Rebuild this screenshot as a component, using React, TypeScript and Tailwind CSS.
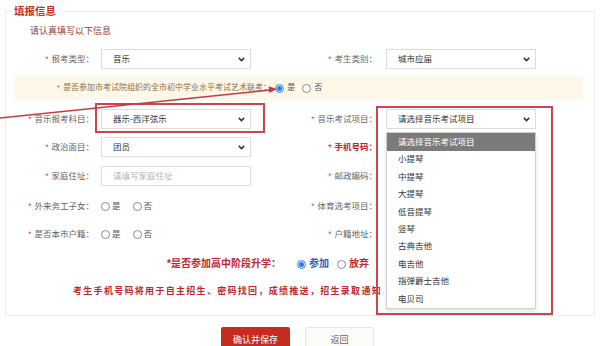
import type { ReactNode } from 'react'

// ── Small bits ─────────────────────────────────────────────────────────────

function Star() {
  return <span className="mr-[3px] text-[#d9534f]">*</span>
}

function Chevron() {
  return (
    <svg width="7" height="5" viewBox="0 0 7 5" aria-hidden="true">
      <path d="M0.8 0.9 3.5 3.6 6.2 0.9" fill="none" stroke="#333" strokeWidth="1.5" />
    </svg>
  )
}

function Radio({ checked }: { checked?: boolean }) {
  if (checked) {
    return (
      <span className="flex h-[9px] w-[9px] shrink-0 items-center justify-center rounded-full border border-[#3d8ce0] bg-[#d6e8fb]">
        <span className="h-[5px] w-[5px] rounded-full bg-[#2e7fd9]" />
      </span>
    )
  }
  return <span className="block h-[9px] w-[9px] shrink-0 rounded-full border border-[#8a8a8a] bg-white" />
}

function LeftLabel({ children }: { children: ReactNode }) {
  return (
    <div className="flex w-[88px] shrink-0 items-center justify-end whitespace-nowrap text-[8.5px] text-[#666]">
      <Star />
      {children}：
    </div>
  )
}

function RightLabel({ children, strong }: { children: ReactNode; strong?: boolean }) {
  return (
    <div
      className={
        strong
          ? 'flex w-[126px] shrink-0 items-center justify-end whitespace-nowrap text-[8.5px] font-bold text-[#b3262a]'
          : 'flex w-[126px] shrink-0 items-center justify-end whitespace-nowrap text-[8.5px] text-[#666]'
      }
    >
      <Star />
      {children}：
    </div>
  )
}

function SelectBox({ value }: { value: string }) {
  return (
    <div className="flex h-[20px] w-[150px] shrink-0 items-center justify-between border border-[#dcdcdc] bg-white pl-[11px] pr-[5px] text-[8.5px] text-[#333]">
      <span>{value}</span>
      <Chevron />
    </div>
  )
}

function InputBox({ placeholder }: { placeholder: string }) {
  return (
    <div className="flex h-[20px] w-[150px] shrink-0 items-center border border-[#dcdcdc] bg-white pl-[11px] text-[8.5px] text-[#b5b5b5]">
      {placeholder}
    </div>
  )
}

function RadioPair({ yes = '是', no = '否' }: { yes?: string; no?: string }) {
  return (
    <div className="ml-[7px] flex w-[150px] shrink-0 items-center text-[8.5px] text-[#555]">
      <Radio />
      <span className="ml-[2px]">{yes}</span>
      <span className="ml-[12px]">
        <Radio />
      </span>
      <span className="ml-[2px]">{no}</span>
    </div>
  )
}

// ── Music exam dropdown ────────────────────────────────────────────────────

const MUSIC_ITEMS = ['小提琴', '中提琴', '大提琴', '低音提琴', '竖琴', '古典吉他', '电吉他', '指弹爵士吉他', '电贝司']

function MusicDropdown() {
  return (
    <div className="absolute left-0 top-[23px] z-10 w-[150px] border border-[#d0d0d0] bg-white shadow-[0_2px_4px_rgba(0,0,0,0.12)]">
      <div className="flex h-[18px] items-center bg-[#7b7b7b] pl-[11px] text-[8.5px] text-white">请选择音乐考试项目</div>
      {MUSIC_ITEMS.map((item) => (
        <div key={item} className="flex h-[17.4px] items-center pl-[11px] text-[8.5px] text-[#333]">
          {item}
        </div>
      ))}
    </div>
  )
}

// ── Annotation arrow ───────────────────────────────────────────────────────

function Arrow() {
  return (
    <svg className="pointer-events-none absolute left-0 top-0 z-30" width="602" height="346" aria-hidden="true">
      <line x1="0" y1="118" x2="270" y2="90" stroke="#c43c40" strokeWidth="1.6" />
      <polygon points="277,89 269.3,92.9 268.6,86.3" fill="#c43c40" />
    </svg>
  )
}

// ── App ────────────────────────────────────────────────────────────────────

export default function App() {
  return (
    <div className="relative h-[346px] w-[602px] overflow-hidden bg-white font-['Liberation_Sans','Noto_Sans_CJK_SC',sans-serif] leading-none">
      <fieldset className="ml-[5px] mt-[4px] h-[312px] w-[590px] border border-[#ececec]">
        <legend className="ml-[7px] pl-[1px] pr-[7px] text-[10.5px] font-bold leading-[14px] text-[#c8312b]">填报信息</legend>

        <p className="ml-[24px] mt-[6px] text-[9px] leading-[14px] text-[#8e3b3b]">请认真填写以下信息</p>

        {/* 报考类型 / 考生类别 */}
        <div className="mt-[11px] flex h-[20px] items-center">
          <LeftLabel>报考类型</LeftLabel>
          <div className="ml-[7px]">
            <SelectBox value="音乐" />
          </div>
          <RightLabel>考生类别</RightLabel>
          <div className="ml-[9px]">
            <SelectBox value="城市应届" />
          </div>
        </div>

        {/* 艺术联考 */}
        <div className="ml-[8px] mt-[7px] flex h-[24px] w-[569px] items-center bg-[#fdf8e9] pl-[43px] text-[8px] text-[#8d6e45]">
          <span className="mr-[3px] text-[#d9534f]">*</span>
          是否参加市考试院组织的全市初中学业水平考试艺术联考：
          <span className="ml-[4px]">
            <Radio checked />
          </span>
          <span className="ml-[3px] text-[#555]">是</span>
          <span className="ml-[7px]">
            <Radio />
          </span>
          <span className="ml-[3px] text-[#555]">否</span>
        </div>

        {/* 音乐报考科目 / 音乐考试项目 */}
        <div className="mt-[9px] flex h-[20px] items-center">
          <LeftLabel>音乐报考科目</LeftLabel>
          <div className="relative ml-[7px]">
            <SelectBox value="器乐-西洋弦乐" />
            <div className="absolute -left-[6px] -top-[6px] z-20 h-[30px] w-[170px] border-2 border-[#c9474b]" />
          </div>
          <RightLabel>音乐考试项目</RightLabel>
          <div className="relative ml-[9px]">
            <SelectBox value="请选择音乐考试项目" />
            <MusicDropdown />
            <div className="absolute -left-[10px] -top-[3px] z-20 h-[209px] w-[177px] border-2 border-[#c9474b]" />
          </div>
        </div>

        {/* 政治面目 / 手机号码 */}
        <div className="mt-[8px] flex h-[20px] items-center">
          <LeftLabel>政治面目</LeftLabel>
          <div className="ml-[7px]">
            <SelectBox value="团员" />
          </div>
          <RightLabel strong>手机号码</RightLabel>
        </div>

        {/* 家庭住址 / 邮政编码 */}
        <div className="mt-[9px] flex h-[20px] items-center">
          <LeftLabel>家庭住址</LeftLabel>
          <div className="ml-[7px]">
            <InputBox placeholder="请填写家庭住址" />
          </div>
          <RightLabel>邮政编码</RightLabel>
        </div>

        {/* 外来务工子女 / 体育选考项目 */}
        <div className="mt-[10px] flex h-[20px] items-center">
          <LeftLabel>外来务工子女</LeftLabel>
          <RadioPair />
          <RightLabel>体育选考项目</RightLabel>
        </div>

        {/* 是否本市户籍 / 户籍地址 */}
        <div className="mt-[8px] flex h-[20px] items-center">
          <LeftLabel>是否本市户籍</LeftLabel>
          <RadioPair />
          <RightLabel>户籍地址</RightLabel>
        </div>

        {/* 升学 */}
        <div className="ml-[161px] mt-[12px] flex h-[16px] items-center text-[10px] font-bold">
          <span className="text-[#c0282d]">*是否参加高中阶段升学：</span>
          <span className="ml-[16px]">
            <Radio checked />
          </span>
          <span className="ml-[3px] text-[#2a5fc0]">参加</span>
          <span className="ml-[8px]">
            <Radio />
          </span>
          <span className="ml-[3px] text-[#c0282d]">放弃</span>
        </div>

        <p className="ml-[67px] mt-[12px] h-[14px] whitespace-nowrap text-[9px] font-bold leading-[14px] tracking-[1.3px] text-[#c0282d]">
          考生手机号码将用于自主招生、密码找回，成绩推送，招生录取通知
        </p>
      </fieldset>

      {/* Actions */}
      <div className="mt-[11px] flex justify-center gap-[15px] pr-[7px]">
        <button className="h-[26px] w-[69px] rounded-[2px] bg-[#c52b1f] text-[9px] text-white">确认并保存</button>
        <button className="h-[26px] w-[69px] rounded-[2px] border border-[#e6e6e6] bg-[#fbfbf7] text-[9px] text-[#666]">返回</button>
      </div>

      <Arrow />
    </div>
  )
}
